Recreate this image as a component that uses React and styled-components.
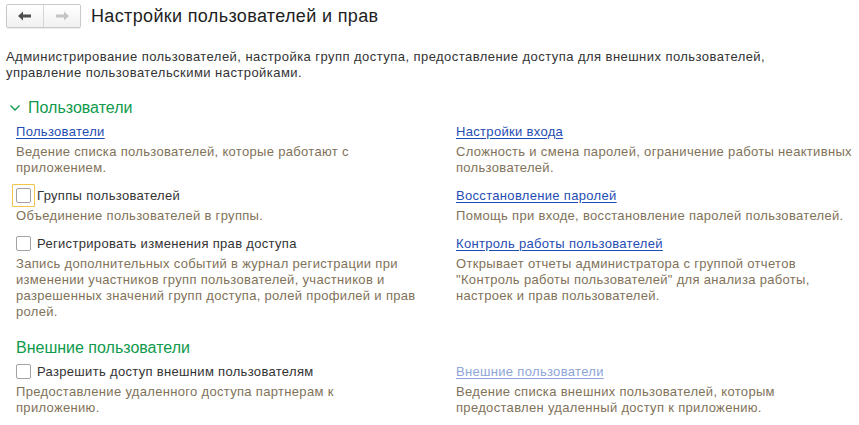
import React from 'react'
import styled, { createGlobalStyle } from 'styled-components'

const GlobalStyle = createGlobalStyle`
  html, body {
    margin: 0;
    padding: 0;
    background: #fff;
  }
  body {
    font-family: 'Liberation Sans', Arial, sans-serif;
    font-size: 13px;
    letter-spacing: 0.32px;
    color: #333;
  }
`

const Page = styled.div`
  width: 859px;
  height: 425px;
  overflow: hidden;
  background: #fff;
`

const TopBar = styled.div`
  display: flex;
  align-items: center;
  height: 30px;
  padding: 2px 0 0 6px;
  box-sizing: border-box;
`

const NavGroup = styled.div`
  display: flex;
  height: 24px;
  border: 1px solid #c9c9c9;
  border-radius: 2px;
  background: linear-gradient(#ffffff, #f1f1f1);
  box-shadow: 0 1px 1px rgba(0, 0, 0, 0.08);
  box-sizing: border-box;
`

const NavButton = styled.div`
  width: 36px;
  display: flex;
  align-items: center;
  justify-content: center;
  & + & {
    border-left: 1px solid #d6d6d6;
  }
`

const Title = styled.h1`
  margin: 0 0 0 10px;
  font-size: 18px;
  font-weight: normal;
  letter-spacing: 0.35px;
  color: #1e1e1e;
  line-height: 22px;
`

const Intro = styled.p`
  margin: 19px 0 0 6px;
  width: 790px;
  line-height: 16px;
  letter-spacing: 0.45px;
  color: #333;
`

const GroupHeader = styled.div`
  display: flex;
  align-items: center;
  height: 20px;
  margin: 17px 0 2px 9px;
  color: #0f9a4c;
  font-size: 16px;
  letter-spacing: 0;
`

const SubHeader = styled.div`
  height: 22px;
  line-height: 22px;
  margin: 9px 0 1px 16px;
  color: #0f9a4c;
  font-size: 16px;
  letter-spacing: 0;
`

// left column width varies per group; the right column always starts at x=456
const Columns = styled.div`
  display: grid;
  grid-template-columns: ${(p) => p.left || 410}px 400px;
  column-gap: ${(p) => 440 - (p.left || 410)}px;
  padding-left: 16px;
`

const Column = styled.div`
  display: flex;
  flex-direction: column;
`

const Item = styled.div`
  display: flex;
  flex-direction: column;
  gap: 2px;
  margin-bottom: 8px;
`

const LabelRow = styled.div`
  display: flex;
  align-items: center;
  height: 22px;
`

const Link = styled.a`
  color: ${(p) => (p.disabled ? '#8ea5d8' : '#1f4db3')};
  text-decoration: underline;
  text-underline-offset: 2px;
  cursor: pointer;
`

const CheckWrap = styled.span`
  position: relative;
  display: inline-flex;
  width: 15px;
  height: 15px;
  margin-right: 6px;
`

const CheckBox = styled.span`
  width: 15px;
  height: 15px;
  box-sizing: border-box;
  border: 1px solid #a3a3a3;
  border-radius: 2px;
  background: #fff;
`

const Focus = styled.span`
  position: absolute;
  left: -4px;
  top: -4px;
  right: -4px;
  bottom: -4px;
  border: 1px solid #f1c44a;
  border-radius: 1px;
`

const Caption = styled.span`
  color: #333;
`

const Note = styled.div`
  line-height: 16px;
  color: #7f7259;
`

const Arrow = ({ dir, color }) => (
  <svg width="14" height="10" viewBox="0 0 14 10">
    <g transform={dir === 'right' ? 'scale(-1,1) translate(-14,0)' : undefined} fill={color}>
      <polygon points="0,5 5,0.5 5,3.5 13,3.5 13,6.5 5,6.5 5,9.5" />
    </g>
  </svg>
)

const Chevron = () => (
  <svg width="12" height="8" viewBox="0 0 12 8" style={{ marginRight: 7 }}>
    <polyline points="1.5,1.5 6,6 10.5,1.5" fill="none" stroke="#0f9a4c" strokeWidth="1.4" />
  </svg>
)

const Entry = ({ link, check, focused, disabled, note }) => (
  <Item>
    <LabelRow>
      {link && <Link disabled={disabled}>{link}</Link>}
      {check && (
        <>
          <CheckWrap>
            <CheckBox />
            {focused && <Focus />}
          </CheckWrap>
          <Caption>{check}</Caption>
        </>
      )}
    </LabelRow>
    <Note>{note}</Note>
  </Item>
)

export default function App() {
  return (
    <Page>
      <GlobalStyle />
      <TopBar>
        <NavGroup>
          <NavButton><Arrow dir="left" color="#4f4f4f" /></NavButton>
          <NavButton><Arrow dir="right" color="#c4c4c4" /></NavButton>
        </NavGroup>
        <Title>Настройки пользователей и прав</Title>
      </TopBar>

      <Intro>
        Администрирование пользователей, настройка групп доступа, предоставление доступа для внешних пользователей,
        управление пользовательскими настройками.
      </Intro>

      <GroupHeader>
        <Chevron />
        Пользователи
      </GroupHeader>

      <Columns>
        <Column>
          <Entry link="Пользователи" note="Ведение списка пользователей, которые работают с приложением." />
          <Entry check="Группы пользователей" focused note="Объединение пользователей в группы." />
          <Entry
            check="Регистрировать изменения прав доступа"
            note="Запись дополнительных событий в журнал регистрации при изменении участников групп пользователей, участников и разрешенных значений групп доступа, ролей профилей и прав ролей."
          />
        </Column>
        <Column>
          <Entry link="Настройки входа" note="Сложность и смена паролей, ограничение работы неактивных пользователей." />
          <Entry link="Восстановление паролей" note="Помощь при входе, восстановление паролей пользователей." />
          <Entry
            link="Контроль работы пользователей"
            note={'Открывает отчеты администратора с группой отчетов "Контроль работы пользователей" для анализа работы, настроек и прав пользователей.'}
          />
        </Column>
      </Columns>

      <SubHeader>Внешние пользователи</SubHeader>

      <Columns left={370}>
        <Column>
          <Entry check="Разрешить доступ внешним пользователям" note="Предоставление удаленного доступа партнерам к приложению." />
        </Column>
        <Column>
          <Entry
            link="Внешние пользователи"
            disabled
            note="Ведение списка внешних пользователей, которым предоставлен удаленный доступ к приложению."
          />
        </Column>
      </Columns>
    </Page>
  )
}
